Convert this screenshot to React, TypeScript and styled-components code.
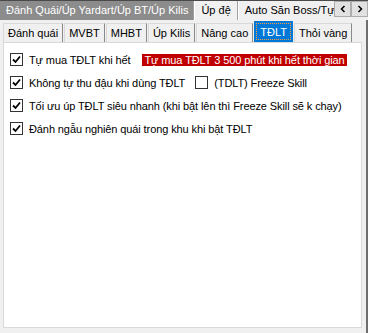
import styled, { createGlobalStyle } from 'styled-components';

const GlobalStyle = createGlobalStyle`
  html, body {
    margin: 0;
    padding: 0;
    background: #f0f0f0;
  }
  body {
    font-family: 'Liberation Sans', Arial, sans-serif;
    font-size: 11px;
    color: #000;
  }
`;

const Window = styled.div`
  width: 368px;
  height: 333px;
  background: #f0f0f0;
  border-top: 1px solid #4a4a4a;
  box-sizing: border-box;
  display: flex;
  flex-direction: column;
  overflow: hidden;
`;

const OuterStrip = styled.div`
  display: flex;
  height: 19px;
  position: relative;
`;

const OuterTab = styled.div<{ $dark?: boolean }>`
  flex: none;
  height: 19px;
  box-sizing: border-box;
  padding: 3px 6px 0 6px;
  white-space: nowrap;
  background: ${(p) => (p.$dark ? '#8c8c8c' : '#f0f0f0')};
  color: ${(p) => (p.$dark ? '#fff' : '#000')};
  border-right: 1px solid #a0a0a0;
  border-left: 1px solid ${(p) => (p.$dark ? '#8c8c8c' : '#fff')};
  &:first-child {
    padding: 3px 5px 0 5px;
  }
`;

const Scroller = styled.div`
  position: absolute;
  right: 0;
  top: 0;
  display: flex;
  background: #f0f0f0;
`;

const ScrollButton = styled.div`
  width: 17px;
  height: 16px;
  box-sizing: border-box;
  border: 1px solid #adadad;
  background: #e1e1e1;
  display: flex;
  align-items: center;
  justify-content: center;
`;

const OuterPage = styled.div`
  flex: 1;
  display: flex;
  flex-direction: column;
  padding: 1px 4px 5px 3px;
  border-right: 2px solid #6e6e6e;
`;

const InnerStrip = styled.div`
  display: flex;
  height: 21px;
  align-items: flex-end;
`;

const InnerTab = styled.div<{ $active?: boolean }>`
  flex: none;
  box-sizing: border-box;
  height: ${(p) => (p.$active ? '21px' : '19px')};
  padding: ${(p) => (p.$active ? '4px 5px 0 5px' : '3px 4px 0 4px')};
  margin-right: 1px;
  margin-left: ${(p) => (p.$active ? '0' : '0')};
  white-space: nowrap;
  background: ${(p) => (p.$active ? '#0078d7' : '#f0f0f0')};
  color: ${(p) => (p.$active ? '#fff' : '#000')};
  border: 1px solid ${(p) => (p.$active ? '#0078d7' : '#d9d9d9')};
  border-right-color: ${(p) => (p.$active ? '#0078d7' : '#8a8a8a')};
  border-bottom: none;
  outline: ${(p) => (p.$active ? '1px dotted #ffa040' : 'none')};
  outline-offset: -3px;
`;

const Page = styled.div`
  flex: 1;
  background: #fff;
  border: 1px solid #d9d9d9;
  padding: 10px 0 0 6px;
  display: flex;
  flex-direction: column;
  gap: 10px;
  letter-spacing: -0.1px;
`;

const Row = styled.div`
  display: flex;
  align-items: center;
  height: 13px;
  white-space: nowrap;
`;

const Box = styled.span`
  width: 13px;
  height: 13px;
  box-sizing: border-box;
  border: 1px solid #333;
  background: #fff;
  display: inline-flex;
  align-items: center;
  justify-content: center;
  margin-right: 6px;
  flex: none;
`;

const Label = styled.span<{ $gap?: number }>`
  margin-right: ${(p) => p.$gap ?? 0}px;
`;

const Warning = styled.span`
  background: #c00000;
  color: #fff;
  padding: 0 2px;
  line-height: 12px;
`;

const Check = ({ on }: { on?: boolean }) => (
  <Box>
    {on && (
      <svg width="9" height="9" viewBox="0 0 9 9">
        <path d="M1 4.5 L3.5 7 L8 1.5" fill="none" stroke="#000" strokeWidth="1.8" />
      </svg>
    )}
  </Box>
);

const Arrow = ({ dir }: { dir: 'l' | 'r' }) => (
  <svg width="6" height="8" viewBox="0 0 6 8">
    <path d={dir === 'l' ? 'M4.5 1 L1.5 4 L4.5 7' : 'M1.5 1 L4.5 4 L1.5 7'} fill="none" stroke="#000" strokeWidth="1.5" />
  </svg>
);

const App = () => {
  return (
    <>
      <GlobalStyle />
      <Window>
        <OuterStrip>
          <OuterTab $dark>Đánh Quái/Úp Yardart/Úp BT/Úp Kilis</OuterTab>
          <OuterTab>Úp đệ</OuterTab>
          <OuterTab>Auto Săn Boss/Tự động</OuterTab>
          <Scroller>
            <ScrollButton>
              <Arrow dir="l" />
            </ScrollButton>
            <ScrollButton>
              <Arrow dir="r" />
            </ScrollButton>
          </Scroller>
        </OuterStrip>
        <OuterPage>
          <InnerStrip>
            {['Đánh quái', 'MVBT', 'MHBT', 'Úp Kilis', 'Nâng cao'].map((el, i) => (
              <InnerTab key={i}>{el}</InnerTab>
            ))}
            <InnerTab $active>TĐLT</InnerTab>
            <InnerTab>Thỏi vàng</InnerTab>
          </InnerStrip>
          <Page>
            <Row>
              <Check on />
              <Label $gap={12}>Tự mua TĐLT khi hết</Label>
              <Warning>Tự mua TĐLT 3 500 phút khi hết thời gian</Warning>
            </Row>
            <Row>
              <Check on />
              <Label $gap={10}>Không tự thu đậu khi dùng TĐLT</Label>
              <Check />
              <Label>(TDLT) Freeze Skill</Label>
            </Row>
            <Row>
              <Check on />
              <Label>Tối ưu úp TĐLT siêu nhanh (khi bật lên thì Freeze Skill sẽ k chạy)</Label>
            </Row>
            <Row>
              <Check on />
              <Label>Đánh ngẫu nghiên quái trong khu khi bật TĐLT</Label>
            </Row>
          </Page>
        </OuterPage>
      </Window>
    </>
  );
};

export default App;
